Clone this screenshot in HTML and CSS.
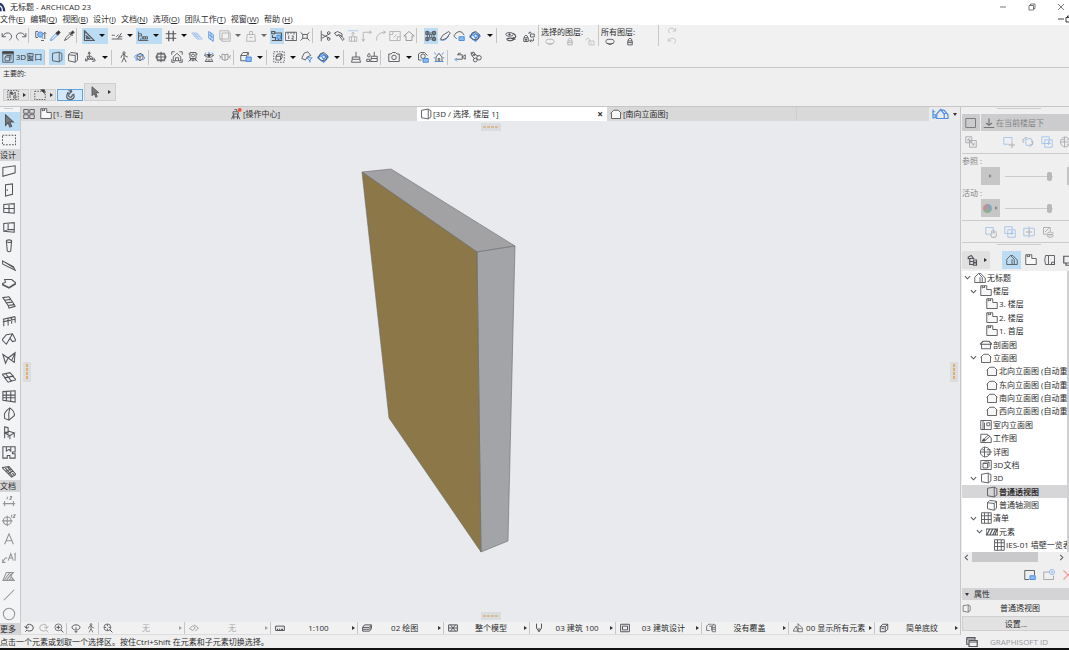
FILE: index.html
```html
<!DOCTYPE html>
<html lang="zh-CN">
<head>
<meta charset="utf-8">
<title>无标题 - ARCHICAD 23</title>
<link rel="stylesheet" href="styles.css">
</head>
<body>
<svg class="defs" aria-hidden="true">
  <symbol id="undo" viewBox="0 0 16 16"><path d="M1.500 4v5h5M2 8.500C4 5 7 3.500 10 4c5 1 5.500 7 1 9.500"/></symbol>
  <symbol id="redo" viewBox="0 0 16 16"><path d="M14.500 4v5h-5M14 8.500C12 5 9 3.500 6 4c-5 1-5.500 7-1 9.500"/></symbol>
  <symbol id="findsel" viewBox="0 0 16 16"><path d="M1 2h3M1 2v8h3M13 3v9M11 5l2-2 2 2M8 14h4"/><circle class="bf" cx="7" cy="6" r="3.500"/><path class="b" d="M9 9l2 3"/></symbol>
  <symbol id="pick" viewBox="0 0 16 16"><path class="b" d="M2 14l1-3 6-6 2 2-6 6z"/><path class="k" d="M9 4l3 3 3-4-2-2z"/></symbol>
  <symbol id="inject" viewBox="0 0 16 16"><path d="M2 14l2-4 5-5 2 2-5 5zM8 3l5 5"/><path class="k" d="M10 4l2 2 3-3-2-2z"/></symbol>
  <symbol id="ruler" viewBox="0 0 16 16"><path class="w" d="M2 1v13h13zM5 8v3.500h4zM2 4l1 1M2 7l1 1M2 10l1 1"/></symbol>
  <symbol id="snapline" viewBox="0 0 16 16"><path d="M1 12h14M1 7h4M7 9l3-3M10 9h5M9 12l5-8"/></symbol>
  <symbol id="snapref" viewBox="0 0 16 16"><path d="M2 2v12h13M2 5h4v3H2M7 9h7v3H7zM9 9v3M11.500 9v3M5 11v3"/><path class="b" d="M4 12h2"/></symbol>
  <symbol id="grid" viewBox="0 0 16 16"><path class="w" d="M5 1v14M11 1v14M1 5h14M1 11h14"/></symbol>
  <symbol id="plane" viewBox="0 0 16 16"><path class="b" d="M1 4h7l7 8H8zM4 4l7 8M3 6.500h7M5 9h7"/></symbol>
  <symbol id="vplane" viewBox="0 0 16 16"><path class="b" d="M5 2l6 4v9l-6-4zM8 4v9M5 6l6 4"/></symbol>
  <symbol id="frame" viewBox="0 0 16 16"><path d="M1 1h12v11H1zM4 4h11v11H4zM1 12l3 3"/></symbol>
  <symbol id="bag" viewBox="0 0 16 16"><path d="M3 6h10l1 9H2zM6 6V2h4v4M6 10h4"/></symbol>
  <symbol id="group" viewBox="0 0 16 16"><path class="w" d="M1 2h4v3H1zM5 4h9v3M14 4v9M2 7v3h4v4h4V9h5M1 14h14"/><path class="bf" d="M8 7h5v5H8z"/></symbol>
  <symbol id="dim12" viewBox="0 0 16 16"><path d="M.5 3v11h15V3zM4 3v3M8 3v2M12 3v3M5 7.500V12M9 8q3-1 2 1.500L9 12h3"/></symbol>
  <symbol id="cross" viewBox="0 0 16 16"><path d="M2 3l12 11M14 3L2 14"/><path class="pf" d="M5 6h6v5H5z"/></symbol>
  <symbol id="scissor" viewBox="0 0 16 16"><path d="M3 1v14M4 6l10 5M4 11l10-6"/><circle cx="13" cy="4" r="1.800"/><circle cx="13" cy="12" r="1.800"/></symbol>
  <symbol id="hammer" viewBox="0 0 16 16"><path d="M2 4l4-2 6 3v4L8 6 5 8zM7 6l6 8 2-2-5-5"/></symbol>
  <symbol id="stretch" viewBox="0 0 16 16"><path class="b" d="M1 1h14"/><path d="M8 3v5M6 5l2-2 2 2M3 9h10v6H3zM6 9v6M10 9v6"/></symbol>
  <symbol id="corner" viewBox="0 0 16 16"><path d="M3 15V3h11M11 1l3 2-3 2M1 12l2 3 2-3"/></symbol>
  <symbol id="arc" viewBox="0 0 16 16"><path d="M2 14C2 7 6 3 14 3M11 1l3 2-3 2"/></symbol>
  <symbol id="boxlink" viewBox="0 0 16 16"><path d="M1 2h14v12H1zM1 6h4V2M11 14V9h4M6 10l4-4"/></symbol>
  <symbol id="house" viewBox="0 0 16 16"><path d="M1 8l7-6 7 6h-3v6H4V8z"/></symbol>
  <symbol id="nodes" viewBox="0 0 16 16"><path d="M3 1v14M12 1v14M1 4h14M1 12h14"/><path d="M1 2h4v4H1zM10 2h4v4h-4zM1 10h4v4H1zM10 10h4v4h-4zM6 6h3v4H6z"/></symbol>
  <symbol id="pen" viewBox="0 0 16 16"><path class="b" d="M1 13q7 3 12-5"/><path d="M2 12l3-5 8-5 2 2-5 7-5 2z"/></symbol>
  <symbol id="cloud" viewBox="0 0 16 16"><path d="M5 12L1 8l3-4 4-2 4 1 3 4"/><path class="bf" d="M8 9h7v5H8z"/></symbol>
  <symbol id="diamond" viewBox="0 0 16 16"><path class="b w" d="M1 9l6-6 8 5-6 7zM1 7h5M6 7l3-2 3 3-3 3z"/><path d="M4 4l5-2 5 4-2 6-6 1-4-3z"/></symbol>
  <symbol id="eyeswap" viewBox="0 0 16 16"><ellipse cx="6" cy="4.500" rx="5" ry="2.500"/><circle class="k" cx="6" cy="4.500" r="1"/><path class="w" d="M2 11q5-3 10 0-5 4-10 0M11 3q6 4 1 7M11 8v3h3"/></symbol>
  <symbol id="lockswap" viewBox="0 0 16 16"><path d="M1 9h6v5H1zM2 9V7q2-3 4 0v2M10 4h5v4h-5zM8 4V2q2-2 3 1M9 13h5v-3M11 11l-2 2 2 2"/><circle class="k" cx="4" cy="11.500" r="1"/></symbol>
  <symbol id="eye" viewBox="0 0 16 16"><ellipse class="w" cx="8" cy="8" rx="7.500" ry="4"/><path class="w" d="M2 11q6 5 12 0"/></symbol>
  <symbol id="lock" viewBox="0 0 16 16"><path class="w" d="M4 7h8v7H4zM5 7V4q3-4 6 0v3M4 10h8"/></symbol>
  <symbol id="unlock" viewBox="0 0 16 16"><path d="M6 7h9v7H6zM1 6V4q3-4 6 0v3M10 9v3"/></symbol>
  <symbol id="win3d" viewBox="0 0 16 16"><path d="M1 1h14v14H1zM1 4h14M4 8h6v5H4zM4 8l2-2h6v5l-2 2M10 8l2-2"/><path class="k" d="M1 1h14v2H1z"/></symbol>
  <symbol id="persp" viewBox="0 0 16 16"><path d="M2 3l9-1.500V14.500L2 13zM11 1.500l3.500 2V12L11 14.500"/></symbol>
  <symbol id="cube" viewBox="0 0 16 16"><path d="M2 5l3-3 9 1-3 3zM2 5v8l9 2V6M14 3v9l-3 3"/></symbol>
  <symbol id="axes" viewBox="0 0 16 16"><path d="M7 9V2M5.500 4L7 1l1.500 3M7 9l-5 4M7 9l6 3M2 10v3h3M13 9l2 4-4 1M4 7h6l2 4H5z"/></symbol>
  <symbol id="walk" viewBox="0 0 16 16"><circle cx="8" cy="2.500" r="1.500"/><path d="M8 4v5l-3 6M8 9l3 6M4 9l1-3 3-2 2 3 3 1"/></symbol>
  <symbol id="orbit" viewBox="0 0 16 16"><path d="M4 6l4-3 4 2v5l-4 3-4-3zM4 6l4 2 4-3M8 8v5"/><path class="b" d="M4 11C-2 8 2 4 8 5s9 5 3 7M5 9v3H2"/></symbol>
  <symbol id="target" viewBox="0 0 16 16"><path d="M3 3h10v10H3zM1 8h14M8 1v14"/><ellipse cx="8" cy="8" rx="6.500" ry="4"/></symbol>
  <symbol id="fithouse" viewBox="0 0 16 16"><path d="M1 5V1h4M11 1h4v4M15 11v4h-4M5 15H1v-4M3 8l5-5 5 5v5H3zM6 13V9h4v4"/></symbol>
  <symbol id="booth" viewBox="0 0 16 16"><path d="M4 2h8v8H4zM2 4h2M12 4h2M6 10l-4 4M10 10l4 4M4 12h8M8 10v4"/><circle cx="8" cy="6" r="2"/></symbol>
  <symbol id="look" viewBox="0 0 16 16"><path class="b" d="M2 5l2-3M8 4V1M14 5l-2-3"/><path d="M2 6q6-4 12 0-6 5-12 0M5 10l-2 4h10l-2-4M6 12h4"/><circle class="k" cx="8" cy="6" r="1.500"/></symbol>
  <symbol id="cyl" viewBox="0 0 16 16"><path d="M4 4q4 2 8 0v7q-4 3-8 0zM0 6l3 2-2 2M16 6l-3 2 2 2M8 5v7"/></symbol>
  <symbol id="cubesel" viewBox="0 0 16 16"><path d="M1 6l3-4h7L9 6zM1 6v7h7M11 2v4M9 6v3"/><path class="bf" d="M8 8h7v6H8z"/></symbol>
  <symbol id="marq3d" viewBox="0 0 16 16"><path class="dash" d="M1 1h14v14H1z"/><path d="M4 7l2-3h6l-2 3zM4 7v5h6l2-3V4M10 7v5"/></symbol>
  <symbol id="shapefilter" viewBox="0 0 16 16"><path d="M1 10l3-7 5-2 4 5-5 2-2 4z"/><path class="b" d="M8 9h7l-3 3v3l-1-3z"/></symbol>
  <symbol id="brush" viewBox="0 0 16 16"><path d="M8 1v7M3 8h10v3H3zM3 11l-1 4h12l-1-4"/></symbol>
  <symbol id="brushes" viewBox="0 0 16 16"><path d="M11 1v6M7 7h8v3H7zM7 10l-1 4h9v-4M4 3q-4 5 0 5 3-1 0-5M1 11h4v3H1z"/></symbol>
  <symbol id="camera" viewBox="0 0 16 16"><path d="M1 4h3l2-2h4l2 2h3v10H1z"/><circle cx="8" cy="8.500" r="3"/></symbol>
  <symbol id="camlock" viewBox="0 0 16 16"><path d="M6 12H2V4l3-2h5l4 4"/><circle cx="8" cy="7" r="3"/><path class="bf" d="M8 10h7v5H8z"/></symbol>
  <symbol id="sunhouse" viewBox="0 0 16 16"><path class="b" d="M2 2l2 3M14 2l-2 3M1 9h2M15 9h-2M2 14h12"/><path d="M4 14V8l4-5 4 5v6M7 14v-4h2v4"/></symbol>
  <symbol id="video" viewBox="0 0 16 16"><path d="M4 5h7v6H3M11 8l4-3v6zM6 5V3h3"/><path class="b" d="M4 10l-3 1 3 3"/></symbol>
  <symbol id="gears" viewBox="0 0 16 16"><circle cx="4" cy="4" r="2.500"/><circle cx="12" cy="9" r="3"/><circle cx="7" cy="12" r="2.500"/><path d="M6 4l5 3M3 7l3 3M1 2l6 4"/></symbol>
  <symbol id="arrow" viewBox="0 0 16 16"><path class="gf" d="M4 1v12l3-3 2 5 2-1-2-5h4z"/></symbol>
  <symbol id="marquee" viewBox="0 0 16 16"><path class="dash" d="M.5 2.500h15v11H.5z"/></symbol>
  <symbol id="marqpt" viewBox="0 0 16 16"><path class="dash" d="M1 3h14v11H1z"/><path class="k" d="M9 1h5v5z"/></symbol>
  <symbol id="marqn" viewBox="0 0 16 16"><path class="dash" d="M1 2h14v12H1z"/><path d="M4 12V5l3 3 4-4v4M9 9h3v3H9z"/><path class="k" d="M4 4h3v3z"/></symbol>
  <symbol id="magnet" viewBox="0 0 16 16"><path class="w" d="M5 5q-4 8 3 9 7 0 5-7l-2 1q0 3-3 3-3-1-1-5zM6 2l5 2M10 1L8 6"/></symbol>
  <symbol id="tiles" viewBox="0 0 16 16"><path d="M1 2h6v5H1zM9 2h6v5H9zM1 9h6v5H1zM9 9h6v5H9z"/></symbol>
  <symbol id="story" viewBox="0 0 16 16"><path class="pf" d="M1 1h8v5h6v8H1z"/><path d="M3 1v3l2-1 1 1V1"/></symbol>
  <symbol id="tower" viewBox="0 0 16 16"><path d="M4 5h7v3H4zM5 8l-3 7M10 8l3 7M5 8v7M10 8v7M6 2h3v3M3 12h9"/><circle class="red" cx="13" cy="2.500" r="2.500"/></symbol>
  <symbol id="elev" viewBox="0 0 16 16"><path class="pf" d="M1 7l4-4h6l4 4h-1v7H2V7z"/></symbol>
  <symbol id="section" viewBox="0 0 16 16"><path class="pf" d="M2 7v6h12V7"/><path class="w" d="M0 7h16l-4-4H4z"/></symbol>
  <symbol id="homes" viewBox="0 0 22 16"><path class="b w" d="M1 2v12M1 5h3M1 9h3v4H1M6 14V8l5-6 5 6v6zM11 2l5 1 5 6v5h-5M16 8l3-2"/></symbol>
  <symbol id="homek" viewBox="0 0 16 16"><path d="M1 14V7l5-5 5 5v7zM6 2h3l6 6v6h-4M8 7v7"/></symbol>
  <symbol id="wall" viewBox="0 0 16 16"><path d="M1 4l14-2v8L1 14z"/></symbol>
  <symbol id="door" viewBox="0 0 16 16"><path d="M4 2l8-1v12l-8 2zM6 7v2"/></symbol>
  <symbol id="window" viewBox="0 0 16 16"><path d="M2 4l12-1v11L2 13zM8 3v11M2 8.500h12"/></symbol>
  <symbol id="skylight" viewBox="0 0 16 16"><path d="M2 4l12-1v11L2 13zM7 3.500V11M7 11h7M7 11l-5 2"/></symbol>
  <symbol id="column" viewBox="0 0 16 16"><ellipse cx="8" cy="2.500" rx="3" ry="1.500"/><path d="M5 2.500l1 11q2 2 4 0l1-11"/></symbol>
  <symbol id="beam" viewBox="0 0 16 16"><path d="M0 3l13 7 2 4L1 7zM3 4.500l11 7"/></symbol>
  <symbol id="slab" viewBox="0 0 16 16"><path d="M0 9l4-2-1-3 8 0 5 4-8 5-4-2zM0 9v1l8 4 8-5"/></symbol>
  <symbol id="stair" viewBox="0 0 16 16"><path d="M1 3l7-1 2 3-7 1zM3 6l7-1 2 3-7 1zM5 9l7-1 2 3-7 1zM7 12l7-1 1 2-7 2zM1 3l6 9"/></symbol>
  <symbol id="rail" viewBox="0 0 16 16"><path d="M1 6l14-3M1 9l14-3M2 6v8M7 5v8M11 4v7M15 3v7"/></symbol>
  <symbol id="roof" viewBox="0 0 16 16"><path d="M0 9l5-6 7-1 4 8-4 1-3-4-4 7zM12 2L8 9"/></symbol>
  <symbol id="shell" viewBox="0 0 16 16"><path d="M1 4l6 4 8-6-1 11-7-5-3 6zM7 8l-3 6M15 2l-4 9"/></symbol>
  <symbol id="layers" viewBox="0 0 16 16"><path d="M0 5l9-2 4 4-9 2zM3 9l9-2 4 4-9 3zM4 4l7 9"/></symbol>
  <symbol id="curtain" viewBox="0 0 16 16"><path d="M1 3l14-1v13L1 13zM5 3v11M10 2.500V14M1 7h14M1 10h14"/></symbol>
  <symbol id="morph" viewBox="0 0 16 16"><path d="M9 1q6 4 5 9l-6 5-5-2q-2-7 6-12zM9 1q-2 6-1 14"/></symbol>
  <symbol id="chair" viewBox="0 0 16 16"><path d="M3 1l4 1v6l-4-1zM3 7v7M3 8l5-2 6 2-5 3zM9 10v5M14 8v5M7 11v2"/></symbol>
  <symbol id="zone" viewBox="0 0 16 16"><path d="M1 2h14v6h-3v2h3v5H9v-3H6v3H1zM5 2v5l3-2 2 2V2"/></symbol>
  <symbol id="mesh" viewBox="0 0 16 16"><path d="M0 4l8-1 8 9-5 3zM3 3.500L12 14M6 3l8 10M4 8l7-2M7 11l6-3"/></symbol>
  <symbol id="dim" viewBox="0 0 16 16"><path d="M1 11h14M3 8v6M13 8v6M6 3v3M9 3h2v1L9 6h2"/></symbol>
  <symbol id="level" viewBox="0 0 16 16"><circle cx="6" cy="9" r="4.500"/><path d="M0 9h12M6 3v12M11 2v3M13 2h2l-2 3h2"/></symbol>
  <symbol id="textA" viewBox="0 0 16 16"><path d="M3 14L8 2l5 12M5 10h6"/></symbol>
  <symbol id="labelA" viewBox="0 0 16 16"><path d="M0 13l4-5h2M0 9v4h4M7 11l3-8 3 8M8 8h4M14 4l1-1v8"/></symbol>
  <symbol id="fill" viewBox="0 0 16 16"><path d="M1 13l4-9h8l-3 4 4 5zM3 12l6-8M5 13l6-8M8 13l3-4M11 13l1-2"/></symbol>
  <symbol id="line" viewBox="0 0 16 16"><path d="M2 14L14 2"/></symbol>
  <symbol id="circle" viewBox="0 0 16 16"><circle cx="8" cy="8" r="6.500"/></symbol>
  <symbol id="zoomback" viewBox="0 0 16 16"><path class="w" d="M4 8q-1-6 5-6 6 1 6 6-1 5-6 5-3 0-4-2M1 5l3 4 4-3M5 11l-3 3"/></symbol>
  <symbol id="zoomfwd" viewBox="0 0 16 16"><path class="w" d="M12 8q1-6-5-6-6 1-6 6 1 5 6 5 3 0 4-2M15 5l-3 4-4-3M11 11l4 4"/></symbol>
  <symbol id="zoomin" viewBox="0 0 16 16"><circle cx="7" cy="7" r="5.500"/><path class="w" d="M4 7h6M7 4v6M11 11l4 4"/></symbol>
  <symbol id="turn" viewBox="0 0 16 16"><path class="w" d="M6 11C-1 9 1 3 8 3s9 6 2 8M8 7v8M6 13l2 2 2-2"/></symbol>
  <symbol id="zoomfit" viewBox="0 0 16 16"><circle cx="7" cy="7" r="5.500"/><path class="w" d="M7 2v3M7 9v3M2 7h3M9 7h3M11 11l4 4"/></symbol>
  <symbol id="rotate" viewBox="0 0 16 16"><path class="w" d="M1 9l5-5 4 4-4 4zM8 3l7 5-5 5"/></symbol>
  <symbol id="scale" viewBox="0 0 16 16"><path class="w" d="M1 5h14v7H1zM4 9v3M7 9v3M10 9v3M12 9v3"/></symbol>
  <symbol id="stack" viewBox="0 0 16 16"><path class="w" d="M4 3h11l-3 4H1zM1 7v3h11l3-4M1 10v3h11l3-4M15 3v6"/></symbol>
  <symbol id="hatch" viewBox="0 0 16 16"><path class="w" d="M1 3h14v10H1zM1 8h14M4 3l4 5-4 5M12 3L8 8l4 5"/></symbol>
  <symbol id="penset" viewBox="0 0 16 16"><path class="w" d="M4 1v7l4 6 4-6V1M8 8v6"/></symbol>
  <symbol id="dwg" viewBox="0 0 16 16"><path class="w" d="M1 2h14v12H1zM4 5h8v6H4z"/></symbol>
  <symbol id="override" viewBox="0 0 16 16"><path d="M6 12H1V5l3-3h5M5 5h4v7M10 3h5v11h-5zM10 7h5M10 10h5M12 1v2"/></symbol>
  <symbol id="reno" viewBox="0 0 16 16"><path d="M0 13h8L5 5zM8 1v13h7V8zM8 9h6"/></symbol>
  <symbol id="box" viewBox="0 0 16 16"><path class="w" d="M2 6l4-4h8l-4 4zM2 6v8h8V6M14 2v8l-4 4M4 9h4"/></symbol>
  <symbol id="interior" viewBox="0 0 16 16"><path d="M1 2h14v12H1zM4 2v12M6 5v9M9 5h4v4H9z"/></symbol>
  <symbol id="worksheet" viewBox="0 0 16 16"><path d="M1 3h9l5 5v6H1zM3 12l8-8 2 2-7 6z"/><path class="k" d="M3 12l2-3 2 2z"/></symbol>
  <symbol id="detail" viewBox="0 0 16 16"><circle cx="7" cy="8" r="6.500"/><path d="M1 8h15M6 1v14M9 5h5M9 11h5M3 5h3"/></symbol>
  <symbol id="doc3d" viewBox="0 0 16 16"><path d="M1 2h14v12H1zM4 6l2-2h6l-2 2zM4 6v6h6V6M12 4v6l-2 2"/></symbol>
  <symbol id="sched" viewBox="0 0 16 16"><path d="M2 1h13v14H2zM2 5h13M2 10h13M6 1v14M11 1v14"/></symbol>
  <symbol id="wallel" viewBox="0 0 16 16"><path class="w" d="M0 4h16v8H0zM1 12l4-8M5 12l4-8M9 12l4-8M12 12l3-8"/></symbol>
  <symbol id="trace" viewBox="0 0 16 16"><path d="M1 2h13v12H1z"/></symbol>
  <symbol id="under" viewBox="0 0 16 16"><path class="w" d="M1 14h14M8 2v9M4 8l4 3 4-3"/></symbol>
  <symbol id="swap" viewBox="0 0 16 16"><path d="M1 1h8v8H1zM6 6h9v9H6zM4 4l8 8M4 7V4h3M12 9v3H9"/></symbol>
  <symbol id="movesq" viewBox="0 0 16 16"><path class="b" d="M9 11H1V2h11v6"/><path d="M12 8v8M8 12h8"/></symbol>
  <symbol id="rotsq" viewBox="0 0 16 16"><path class="b" d="M4 5l8-2 2 8-8 2z"/><path d="M2 9q-3-6 5-7M14 6q2 6-4 8"/></symbol>
  <symbol id="addsq" viewBox="0 0 16 16"><path class="b" d="M1 1h10v9H1zM5 5h10v10H5zM10 7v5M8 10h5"/></symbol>
  <symbol id="split" viewBox="0 0 16 16"><path class="b" d="M7 3H1v10h6M9 3h6v10H9"/><path d="M8 1v14M4 8h8"/></symbol>
  <symbol id="hand" viewBox="0 0 16 16"><path class="b" d="M6 11H1V2h10v4"/><path d="M7 10l2 5h5l2-5V7M9 11V6M11 10V5M13 10V6"/></symbol>
  <symbol id="seal" viewBox="0 0 16 16"><path d="M7 11H2V2h9v5M4 8l5-5"/><ellipse cx="11" cy="10" rx="4" ry="2"/><ellipse cx="11" cy="13" rx="4" ry="2"/></symbol>
  <symbol id="chooser" viewBox="0 0 16 16"><path class="w" d="M3 7V4l4-2 3 4H3zM5 6v8h5M5 10h4M10 8h4v3h-4zM10 12h4v3h-4z"/></symbol>
  <symbol id="layout" viewBox="0 0 16 16"><path d="M2 2h4v12H2q-2-6 0-12M6 2h8v12H6M10 11h4v3h-4z"/></symbol>
  <symbol id="book" viewBox="0 0 16 16"><path class="w" d="M1 3h14v9H1zM4 12v3h8v-3"/></symbol>
  <symbol id="saveview" viewBox="0 0 16 16"><path d="M7 14H1V2h13v6"/><path class="bf" d="M8 9h7v5H8z"/></symbol>
  <symbol id="newfolder" viewBox="0 0 16 16"><path d="M8 4H1v10h13V9"/><circle class="b" cx="12" cy="4" r="3.500"/><path class="b" d="M12 2v4M10 4h4"/></symbol>
  <symbol id="del" viewBox="0 0 16 16"><path class="w" d="M2 2l12 12M14 2L2 14"/></symbol>
  <symbol id="restore" viewBox="0 0 16 16"><path class="w" d="M2 5h9v9H2zM5 5V2h9v9h-3"/></symbol>
  <symbol id="windows" viewBox="0 0 16 16"><path class="w" d="M1 2h11v3M1 2v9h3M4 6h11v8H4zM4 8h11M1 4h11"/></symbol>
  <symbol id="min" viewBox="0 0 16 16"><path class="w" d="M2 8h12"/></symbol>
  <symbol id="down" viewBox="0 0 16 16"><path class="ww" d="M2 5l6 6 6-6"/></symbol>
  <symbol id="left" viewBox="0 0 16 16"><path class="ww" d="M11 2L5 8l6 6"/></symbol>
  <symbol id="right" viewBox="0 0 16 16"><path class="ww" d="M5 2l6 6-6 6"/></symbol>
  <symbol id="logo" viewBox="0 0 10 16"><path class="navy" d="M0 1q7 1 9 14H5Q5 7 0 5z"/><path class="navy" d="M0 7q3 2 3 8H0z"/></symbol>
</svg>

<header class="title">
  <svg class="i"><use href="#logo"/></svg><h1>无标题 - ARCHICAD 23</h1>
  <div class="wins">
    <button aria-label="最小化"><svg class="i"><use href="#min"/></svg></button>
    <button aria-label="还原"><svg class="i"><use href="#restore"/></svg></button>
    <button aria-label="关闭"><svg class="i"><use href="#del"/></svg></button>
  </div>
</header>
<nav class="menu">
  <button>文件(<u>E</u>)</button><button>编辑(<u>Q</u>)</button><button>视图(<u>B</u>)</button><button>设计(<u>I</u>)</button><button>文档(<u>N</u>)</button><button>选项(<u>O</u>)</button><button>团队工作(<u>T</u>)</button><button>视窗(<u>W</u>)</button><button>帮助 (<u>H</u>)</button>
  <span class="docwins"><svg class="i"><use href="#min"/></svg><svg class="i"><use href="#restore"/></svg></span>
</nav>

<div class="bars">
  <div class="bar one">
    <button><svg class="i"><use href="#undo"/></svg></button><button><svg class="i"><use href="#redo"/></svg></button><i class="sep"></i>
    <button><svg class="i"><use href="#findsel"/></svg></button><button><svg class="i"><use href="#pick"/></svg></button><button><svg class="i"><use href="#inject"/></svg></button><i class="sep"></i>
    <button class="on"><svg class="i"><use href="#ruler"/></svg></button><button class="caret on"></button><i class="gap"></i>
    <button><svg class="i"><use href="#snapline"/></svg></button><button class="caret"></button>
    <button class="on"><svg class="i"><use href="#snapref"/></svg></button><button class="caret on"></button><i class="gap"></i>
    <button><svg class="i"><use href="#grid"/></svg></button><button class="caret"></button>
    <button class="soft"><svg class="i"><use href="#plane"/></svg></button><button><svg class="i"><use href="#vplane"/></svg></button><button class="off"><svg class="i"><use href="#frame"/></svg></button><button class="caret mid"></button>
    <button class="off"><svg class="i"><use href="#bag"/></svg></button><button class="caret mid"></button>
    <button class="on"><svg class="i"><use href="#group"/></svg></button><button><svg class="i"><use href="#dim12"/></svg></button><button><svg class="i"><use href="#cross"/></svg></button><i class="sep"></i>
    <button><svg class="i"><use href="#scissor"/></svg></button><button><svg class="i"><use href="#hammer"/></svg></button><button class="off"><svg class="i"><use href="#stretch"/></svg></button><button class="off"><svg class="i"><use href="#corner"/></svg></button><button class="off"><svg class="i"><use href="#arc"/></svg></button><button class="off"><svg class="i"><use href="#boxlink"/></svg></button><button class="mid"><svg class="i"><use href="#house"/></svg></button><i class="sep wide"></i>
    <button class="on"><svg class="i"><use href="#nodes"/></svg></button><button><svg class="i"><use href="#pen"/></svg></button><button><svg class="i"><use href="#cloud"/></svg></button><button class="big"><svg class="i"><use href="#diamond"/></svg></button><button class="caret"></button><i class="sep"></i>
    <button class="big low"><svg class="i"><use href="#eyeswap"/></svg></button><button class="big low"><svg class="i"><use href="#lockswap"/></svg></button>
    <div class="lay"><span>选择的图层:</span><div class="off"><svg class="i"><use href="#eye"/></svg><svg class="i"><use href="#lock"/></svg><svg class="i"><use href="#unlock"/></svg></div></div>
    <div class="lay"><span>所有图层:</span><div><svg class="i"><use href="#eye"/></svg><svg class="i"><use href="#lock"/></svg></div></div>
    <div class="lay hist"><svg class="i off"><use href="#redo"/></svg><svg class="i off"><use href="#undo"/></svg></div>
  </div>
  <div class="bar two">
    <button class="on named"><svg class="i"><use href="#win3d"/></svg>3D窗口</button><i class="sep"></i>
    <button class="on"><svg class="i"><use href="#persp"/></svg></button><button><svg class="i"><use href="#cube"/></svg></button><button class="big"><svg class="i"><use href="#axes"/></svg></button><button class="caret"></button><i class="sep"></i>
    <button><svg class="i"><use href="#walk"/></svg></button><button><svg class="i"><use href="#orbit"/></svg></button><i class="sep"></i>
    <button><svg class="i"><use href="#target"/></svg></button><button><svg class="i"><use href="#fithouse"/></svg></button><button><svg class="i"><use href="#booth"/></svg></button><button><svg class="i"><use href="#look"/></svg></button><button class="mid"><svg class="i"><use href="#cyl"/></svg></button><i class="sep"></i>
    <button><svg class="i"><use href="#cubesel"/></svg></button><button class="caret"></button><i class="sep"></i>
    <button><svg class="i"><use href="#marq3d"/></svg></button><button class="caret"></button><button><svg class="i"><use href="#shapefilter"/></svg></button><button><svg class="i"><use href="#diamond"/></svg></button><button class="caret"></button><i class="sep"></i>
    <button><svg class="i"><use href="#brush"/></svg></button><button><svg class="i"><use href="#brushes"/></svg></button><i class="sep"></i>
    <button class="big"><svg class="i"><use href="#camera"/></svg></button><button class="caret"></button><button><svg class="i"><use href="#camlock"/></svg></button><button><svg class="i"><use href="#sunhouse"/></svg></button><i class="sep"></i>
    <button><svg class="i"><use href="#video"/></svg></button><button><svg class="i"><use href="#gears"/></svg></button>
  </div>
</div>

<div class="info">
  <span>主要的:</span>
  <div class="methods">
    <button><svg class="i"><use href="#marqn"/></svg><b class="play"></b></button>
    <button><svg class="i"><use href="#marqpt"/></svg><b class="play"></b></button>
    <button class="picked"><svg class="i"><use href="#magnet"/></svg></button>
    <button class="tall"><svg class="i"><use href="#arrow"/></svg><b class="play"></b></button>
  </div>
</div>

<div class="work">
  <aside class="tools">
    <i class="grip"></i>
    <button class="on"><svg class="i"><use href="#arrow"/></svg></button>
    <button><svg class="i"><use href="#marquee"/></svg></button>
    <h2>设计</h2>
    <button><svg class="i"><use href="#wall"/></svg></button>
    <button><svg class="i"><use href="#door"/></svg></button>
    <button><svg class="i"><use href="#window"/></svg></button>
    <button><svg class="i"><use href="#skylight"/></svg></button>
    <button><svg class="i"><use href="#column"/></svg></button>
    <button><svg class="i"><use href="#beam"/></svg></button>
    <button><svg class="i"><use href="#slab"/></svg></button>
    <button><svg class="i"><use href="#stair"/></svg></button>
    <button><svg class="i"><use href="#rail"/></svg></button>
    <button><svg class="i"><use href="#roof"/></svg></button>
    <button><svg class="i"><use href="#shell"/></svg></button>
    <button><svg class="i"><use href="#layers"/></svg></button>
    <button><svg class="i"><use href="#curtain"/></svg></button>
    <button><svg class="i"><use href="#morph"/></svg></button>
    <button><svg class="i"><use href="#chair"/></svg></button>
    <button><svg class="i"><use href="#zone"/></svg></button>
    <button><svg class="i"><use href="#mesh"/></svg></button>
    <h2>文档</h2>
    <button class="mid"><svg class="i"><use href="#dim"/></svg></button>
    <button class="mid"><svg class="i"><use href="#level"/></svg></button>
    <button class="mid"><svg class="i"><use href="#textA"/></svg></button>
    <button class="mid"><svg class="i"><use href="#labelA"/></svg></button>
    <button class="mid"><svg class="i"><use href="#fill"/></svg></button>
    <button class="mid"><svg class="i"><use href="#line"/></svg></button>
    <button class="mid"><svg class="i"><use href="#circle"/></svg></button>
    <h2>更多</h2>
  </aside>

  <main>
    <div class="tabs">
      <button class="all"><svg class="i"><use href="#tiles"/></svg></button>
      <button class="tab"><svg class="i"><use href="#story"/></svg>[1. 首层]</button>
      <button class="tab"><svg class="i"><use href="#tower"/></svg>[操作中心]</button>
      <button class="tab cur"><svg class="i"><use href="#persp"/></svg>[3D / 选择, 楼层 1]<span>×</span></button>
      <button class="tab last"><svg class="i"><use href="#elev"/></svg>[南向立面图]</button>
      <button class="nav"><svg class="i"><use href="#homes"/></svg><b class="drop"></b></button>
    </div>
    <div class="view">
      <svg class="model" viewBox="0 0 939 501">
        <polygon class="top" points="341,51 370,48 494,125 456,131"/>
        <polygon class="side" points="456,131 494,125 487,420 460,431"/>
        <polygon class="face" points="341,51 456,131 460,431 368,297"/>
      </svg>
      <i class="h up"></i><i class="h dn"></i><i class="v lf"></i><i class="v rt"></i>
    </div>
    <div class="quick">
      <div class="zooms"><button><svg class="i"><use href="#zoomback"/></svg></button><button class="off"><svg class="i"><use href="#zoomfwd"/></svg></button><button><svg class="i"><use href="#zoomin"/></svg></button><i class="sep"></i><button><svg class="i"><use href="#turn"/></svg></button><button><svg class="i"><use href="#walk"/></svg></button></div>
      <button class="q dim"><svg class="i dark"><use href="#zoomfit"/></svg><span>无</span><b class="play"></b></button>
      <button class="q dim"><svg class="i"><use href="#rotate"/></svg><span>无</span><b class="play"></b></button>
      <button class="q"><svg class="i"><use href="#scale"/></svg><span>1:100</span><b class="play"></b></button>
      <button class="q"><svg class="i"><use href="#stack"/></svg><span>02 绘图</span><b class="play"></b></button>
      <button class="q"><svg class="i"><use href="#hatch"/></svg><span>整个模型</span><b class="play"></b></button>
      <button class="q"><svg class="i"><use href="#penset"/></svg><span>03 建筑 100</span><b class="play"></b></button>
      <button class="q"><svg class="i"><use href="#dwg"/></svg><span>03 建筑设计</span><b class="play"></b></button>
      <button class="q"><svg class="i"><use href="#override"/></svg><span>没有覆盖</span><b class="play"></b></button>
      <button class="q"><svg class="i"><use href="#reno"/></svg><span>00 显示所有元素</span><b class="play"></b></button>
      <button class="q"><svg class="i"><use href="#box"/></svg><span>简单底纹</span><b class="play"></b></button>
    </div>
  </main>

  <aside class="side-panel">
    <section class="trace">
      <i class="grip"></i>
      <div class="ref"><button><svg class="i"><use href="#trace"/></svg></button><button class="where"><svg class="i"><use href="#under"/></svg>在当前楼层下</button></div>
      <div class="row r1"><svg class="i"><use href="#swap"/></svg><svg class="i"><use href="#movesq"/></svg><svg class="i"><use href="#rotsq"/></svg><svg class="i"><use href="#addsq"/></svg><svg class="i"><use href="#detail"/></svg></div>
      <label for="ref-op">参照 :</label>
      <div class="slide"><button aria-label="参照颜色"><b class="play"></b></button><input id="ref-op" type="range" value="98" disabled><i></i></div>
      <label for="act-op">活动 :</label>
      <div class="slide"><button aria-label="活动颜色"><em></em><b class="play"></b></button><input id="act-op" type="range" value="98" disabled></div>
      <div class="row r2"><svg class="i"><use href="#hand"/></svg><svg class="i"><use href="#addsq"/></svg><svg class="i"><use href="#split"/></svg><svg class="i"><use href="#seal"/></svg></div>
    </section>
    <i class="grip"></i>
    <div class="maps">
      <button class="choose"><svg class="i"><use href="#chooser"/></svg><b class="play"></b></button>
      <button class="on"><svg class="i"><use href="#homek"/></svg></button><button><svg class="i"><use href="#story"/></svg></button><button><svg class="i"><use href="#layout"/></svg></button><button><svg class="i"><use href="#book"/></svg></button>
    </div>
    <ul class="tree">
      <li><svg class="i chev"><use href="#down"/></svg><svg class="i"><use href="#homek"/></svg>无标题</li>
      <li class="l1"><svg class="i chev"><use href="#down"/></svg><svg class="i"><use href="#story"/></svg>楼层</li>
      <li class="l3"><svg class="i"><use href="#story"/></svg>3. 楼层</li>
      <li class="l3"><svg class="i"><use href="#story"/></svg>2. 楼层</li>
      <li class="l3"><svg class="i"><use href="#story"/></svg>1. 首层</li>
      <li class="l2"><svg class="i"><use href="#section"/></svg>剖面图</li>
      <li class="l1"><svg class="i chev"><use href="#down"/></svg><svg class="i"><use href="#elev"/></svg>立面图</li>
      <li class="l3"><svg class="i"><use href="#elev"/></svg>北向立面图 (自动重建)</li>
      <li class="l3"><svg class="i"><use href="#elev"/></svg>东向立面图 (自动重建)</li>
      <li class="l3"><svg class="i"><use href="#elev"/></svg>南向立面图 (自动重建)</li>
      <li class="l3"><svg class="i"><use href="#elev"/></svg>西向立面图 (自动重建)</li>
      <li class="l2"><svg class="i"><use href="#interior"/></svg>室内立面图</li>
      <li class="l2"><svg class="i"><use href="#worksheet"/></svg>工作图</li>
      <li class="l2"><svg class="i"><use href="#detail"/></svg>详图</li>
      <li class="l2"><svg class="i"><use href="#doc3d"/></svg>3D文档</li>
      <li class="l1"><svg class="i chev"><use href="#down"/></svg><svg class="i"><use href="#persp"/></svg>3D</li>
      <li class="l3 sel"><svg class="i"><use href="#persp"/></svg>普通透视图</li>
      <li class="l3"><svg class="i"><use href="#cube"/></svg>普通轴测图</li>
      <li class="l1"><svg class="i chev"><use href="#down"/></svg><svg class="i"><use href="#sched"/></svg>清单</li>
      <li class="l2"><svg class="i chev"><use href="#down"/></svg><svg class="i"><use href="#wallel"/></svg>元素</li>
      <li class="l4"><svg class="i"><use href="#sched"/></svg>IES-01 墙壁一览表</li>
    </ul>
    <div class="hscroll"><svg class="i chev"><use href="#left"/></svg><b></b><svg class="i chev"><use href="#right"/></svg></div>
    <div class="acts"><button><svg class="i"><use href="#saveview"/></svg></button><button class="soft"><svg class="i"><use href="#newfolder"/></svg></button><button class="kill"><svg class="i"><use href="#del"/></svg></button></div>
    <h3><b class="drop"></b>属性</h3>
    <div class="prop"><svg class="i"><use href="#persp"/></svg><span>普通透视图</span></div>
    <button class="set">设置...</button>
  </aside>
</div>
<footer><p>点击一个元素或划取一个选择区。按住Ctrl+Shift 在元素和子元素切换选择。</p><div><svg class="i"><use href="#windows"/></svg><span>GRAPHISOFT ID</span></div></footer>
</body>
</html>
```
FILE: styles.css
```css
* { box-sizing: border-box; }
body {
  margin: 0;
  height: 100vh;
  display: flex;
  flex-direction: column;
  overflow: hidden;
  background: #efeff0;
  color: #2c2c2e;
  font: 8px/12px "Open Sans", "Noto Sans CJK SC", sans-serif;
  white-space: nowrap;
}
button {
  margin: 0;
  padding: 0;
  border: 0;
  background: none;
  color: inherit;
  font: inherit;
  display: flex;
  align-items: center;
  justify-content: center;
  flex: none;
}
h1, h2, h3, p, ul { margin: 0; padding: 0; font: inherit; list-style: none; }

/* icons */
.defs { display: none; }
.i {
  width: 12px;
  height: 12px;
  flex: none;
  fill: none;
  stroke: #55575b;
  stroke-width: 1.2;
}
.b { stroke: #4b8fe8; }
.w { stroke-width: 1.6; }
.ww { stroke-width: 2.4; }
.k { fill: #333; }
.bf { fill: #8dbcf2; stroke: #3f86e0; }
.pf { fill: #f8f8f8; }
.gf { fill: #77797d; }
.red { fill: #f0502d; stroke: none; }
.navy { fill: #26336b; stroke: none; }
.dash { stroke-dasharray: 2 1.500; }
.off { opacity: .4; }
.mid { opacity: .6; }
.soft { opacity: .5; }
.on { background: #bcdcf4; }
.play {
  border: 2px solid transparent;
  border-left: 3px solid #333;
  border-right: 0;
  flex: none;
}
.drop {
  border: 2px solid transparent;
  border-top: 3px solid #333;
  border-bottom: 0;
  flex: none;
}

/* title and menu */
.title { height: 13px; flex: none; display: flex; align-items: center; background: #fff; }
.title > .i { width: 6px; margin-right: 4px; }
.wins { margin-left: auto; display: flex; gap: 21px; padding-right: 4px; }
.wins .i { width: 8px; height: 8px; }
.menu { height: 12px; flex: none; display: flex; gap: 5px; background: #fff; overflow: hidden; }
.docwins { margin-left: auto; margin-right: -4px; display: flex; align-items: center; }
.docwins .i { width: 8px; height: 8px; stroke: #111; }
.docwins .w { stroke-width: 2.4; }

/* toolbars */
.bars { flex: none; height: 43px; background: #f1f1f2; border-bottom: 1px solid #c6c6c6; }
.bar { display: flex; align-items: center; }
.bar button { width: 16px; height: 16px; }
.one { height: 21px; }
.one button { width: 14px; height: 16px; }
.two { height: 22px; }
.one .big, .two .big { width: 18px; }
.one .low { padding-top: 3px; }
.bar .caret { width: 12px; }
.caret::after { content: ""; border: 3px solid transparent; border-top: 3px solid #111; border-bottom: 0; }
.bar .named { width: 44px; gap: 2px; }
.sep { width: 5px; height: 15px; border-left: 1px solid #c4c4c6; flex: none; }
.one .sep { width: 6px; }
.one .sep.wide { width: 8px; }
.gap { width: 2px; flex: none; }
.lay { height: 21px; width: 60px; border-left: 1px solid #c8c8ca; padding-left: 2px; line-height: 12px; flex: none; }
.lay > span { display: block; height: 12px; padding-top: 1px; }
.lay > div { display: flex; gap: 10px; padding-left: 4px; }
.lay .i { width: 10px; height: 9px; display: block; }
.hist { display: flex; flex-direction: column; justify-content: space-around; padding-left: 8px; }

/* info box */
.info { flex: none; height: 39px; border-bottom: 1px solid #c6c6c6; display: flex; flex-direction: column; justify-content: space-between; }
.info > span { padding-left: 3px; line-height: 11px; font-size: 7px; }
.methods { display: flex; align-items: flex-end; padding: 0 3px 5px; gap: 1px; }
.methods button { width: 26px; height: 12px; gap: 4px; background: #e2e2e3; border: 1px solid #cfcfd0; }
.methods .picked { background: #d3e8fa; border-color: #5fa3df; }
.methods .tall { width: 32px; height: 18px; gap: 7px; }

/* workspace */
.work { flex: 1; min-height: 0; display: flex; }
.tools { width: 21px; flex: none; display: flex; flex-direction: column; border-right: 1px solid #c9c9cc; background: #f3f4f5; overflow: hidden; }
.tools button { flex: 1 1 0; min-height: 0; padding-right: 3px; }
.tools .i { width: 14px; height: 14px; }
.tools h2 { height: 12px; background: #d5d5d7; flex: none; }
.grip { display: block; height: 5px; flex: none; overflow: hidden; }
.grip::after { content: ""; display: block; width: 9px; height: 1px; margin: 1px 4px; background: #ccc; }
main { flex: 1; min-width: 0; display: flex; flex-direction: column; }
.tabs { height: 14px; flex: none; display: flex; background: #d9d9da; }
.all { width: 16px; }
.tab { flex: 0 1 190px; min-width: 0; justify-content: flex-start; gap: 1px; padding-left: 3px; }
.cur { background: #fff; }
.cur span { margin-left: auto; padding-right: 4px; font-weight: 700; font-size: 10px; }
.last { border-right: 1px solid #cfcfd0; }
.nav { width: 31px; margin-left: auto; background: #ebebec; gap: 4px; }
.nav .i { width: 17px; }
.view { flex: 1; min-height: 0; position: relative; background: #e8eaed; }
.model { display: block; width: 100%; height: 100%; }
.model polygon { stroke: #6a6b6f; stroke-width: .6; }
.top { fill: #a2a2a4; }
.side { fill: #a3a4a8; }
.face { fill: #8b7747; }

/* pane handles */
.view i { position: absolute; background: #dbdcde; }
.view i::after { content: ""; position: absolute; }
.h { width: 20px; height: 8px; left: calc(50% - 10px); }
.h::after { inset: 3px 2px; background: repeating-linear-gradient(90deg, #d9bd95 0 3px, transparent 3px 4px); }
.v { width: 8px; height: 20px; top: calc(50% - 10px); }
.v::after { inset: 2px 3px; background: repeating-linear-gradient(#e3b06c 0 3px, transparent 3px 4px); }
.up { top: 2px; }
.dn { bottom: 2px; }
.lf { left: 2px; }
.rt { right: 2px; }

/* quick options */
.quick { height: 13px; flex: none; display: flex; align-items: stretch; background: #f1f1f2; border-bottom: 1px solid #dcdcde; }
.zooms { width: 77px; flex: none; display: flex; align-items: center; }
.zooms button { width: 15px; }
.zooms .sep { width: 2px; height: 11px; }
.quick .i { width: 10px; height: 10px; }
.q { flex: 1 1 0; min-width: 0; border-left: 1px solid #c6c6c8; padding: 0 2px 0 4px; }
.q span { flex: 1; text-align: center; }
.q.dim { color: #aaa; }
.dim .i { opacity: .5; }
.dim .dark { opacity: 1; }
.dim .play { opacity: .4; }

/* right panel */
.side-panel { width: 109px; flex: none; display: flex; flex-direction: column; border-left: 1px solid #c6c6c8; padding-left: 1px; overflow: hidden; }
.side-panel .grip { height: 6px; }
.side-panel .grip::after { width: 44px; margin: 1px 35px; }
.trace { flex: none; color: #858588; border-bottom: 1px solid #cbcbcd; }
.ref { display: flex; gap: 1px; padding-top: 1px; }
.ref button { width: 18px; height: 17px; background: #c4c4c6; opacity: .8; }
.ref .where { flex: 1; justify-content: flex-start; padding-left: 2px; gap: 1px; color: #666; }
.row { display: flex; align-items: center; height: 23px; gap: 7px; }
.row .i { opacity: .45; }
.r1 { padding-left: 3px; border-bottom: 1px solid #cbcbcd; }
.r1 .i:first-child { margin-right: 19px; }
.r2 { padding-left: 23px; border-top: 1px solid #cbcbcd; margin-top: 2px; height: 22px; }
.trace label { display: block; line-height: 12px; padding-top: 1px; height: 12px; }
.slide { display: flex; align-items: center; gap: 5px; padding-left: 19px; height: 20px; }
.slide button { width: 19px; height: 18px; background: #c6c6c7; gap: 3px; }
.slide .play { opacity: .4; }
.slide em { width: 9px; height: 9px; border-radius: 50%; background: conic-gradient(#8ba2b8 33%, #8fae96 33% 66%, #c98f8f 66%); }
.slide > i { width: 2px; height: 18px; margin-left: auto; background: #c4c4c4; }
.slide input { appearance: none; width: 48px; height: 10px; margin: 0; background: linear-gradient(#ccc, #ccc) center / 100% 1px no-repeat; }
.slide input::-webkit-slider-thumb { appearance: none; width: 5px; height: 9px; background: #b9b9ba; border-radius: 2px; }
.maps { display: flex; align-items: center; height: 22px; flex: none; padding-bottom: 1px; }
.maps button { width: 19px; height: 18px; }
.maps .choose { width: 28px; margin-right: 12px; background: #e0e0e1; gap: 6px; }
.tree { flex: 1; min-height: 0; margin-right: 2px; background: #fff; display: flex; flex-direction: column; overflow: hidden; box-shadow: 2px 0 #d0d0d2; }
.tree li { flex: 1 1 0; min-height: 0; display: flex; align-items: center; gap: 1px; padding-left: 2px; }
.i.chev { width: 7px; height: 7px; margin-right: 2px; }
.tree .l1 { padding-left: 8px; }
.tree .l2 { padding-left: 18px; }
.tree .l2:has(.chev) { padding-left: 14px; }
.tree .l3 { padding-left: 24px; }
.tree .l4 { padding-left: 31px; }
.tree .sel { background: #d6d6d8; font-weight: 700; }
.hscroll { height: 10px; flex: none; display: flex; align-items: center; padding: 0 2px 0 1px; }
.hscroll b { width: 66px; height: 10px; margin-right: auto; background: #c9c9cb; }
.acts { height: 26px; flex: none; display: flex; align-items: center; justify-content: flex-end; gap: 7px; margin-right: -5px; }
.kill .i { stroke: #ef9b93; }
h3 { height: 12px; flex: none; display: flex; align-items: center; gap: 5px; padding-left: 3px; background: #d4d4d6; }
.side-panel h3 { background: #d4d4d6; }
.prop { height: 16px; flex: none; display: flex; align-items: center; }
.prop .i { width: 9px; height: 9px; }
.prop span { flex: 1; text-align: center; }
.set { height: 15px; margin-bottom: 4px; background: #e2e2e3; border: 1px solid #cfcfd0; border-right: 0; }

footer { height: 15px; flex: none; display: flex; justify-content: space-between; align-items: center; border-bottom: 2px solid #111; }
footer div { width: 103px; display: flex; align-items: center; gap: 12px; color: #98989c; }
```
